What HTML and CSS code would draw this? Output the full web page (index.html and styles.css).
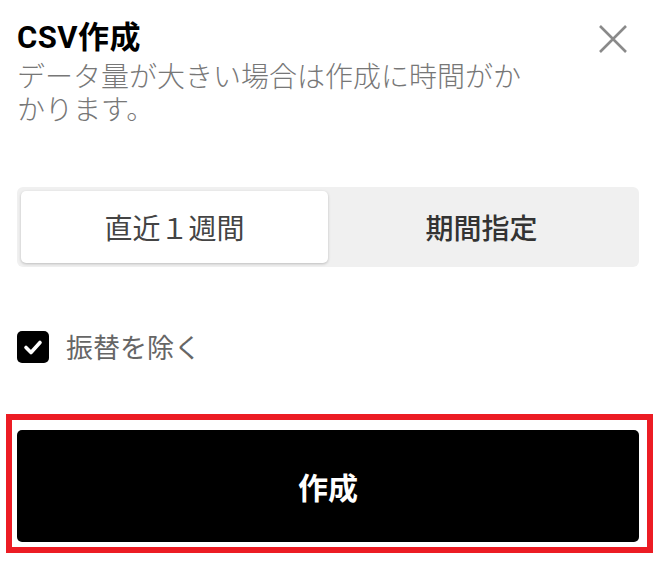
FILE: index.html
```html
<!DOCTYPE html>
<html lang="ja">

<head>
  <meta charset="UTF-8">
  <meta name="viewport" content="width=device-width, initial-scale=1.0">
  <title>CSV作成</title>
  <link rel="stylesheet" href="styles.css">
</head>

<body>
  <div class="sheet">
    <div class="head">
      <div class="head-text">
        <h1 class="title">CSV作成</h1>
        <p class="lead">データ量が大きい場合は作成に時間がかかります。</p>
      </div>
      <button class="close" type="button" aria-label="閉じる">
        <svg width="30" height="28" viewBox="0 0 30 28">
          <path d="M2 1 L28 27 M28 1 L2 27" stroke="#8a8a8a" stroke-width="2.6" fill="none" />
        </svg>
      </button>
    </div>

    <div class="segment">
      <div class="seg seg-active">直近１週間</div>
      <div class="seg">期間指定</div>
    </div>

    <label class="check">
      <span class="box">
        <svg width="32" height="32" viewBox="0 0 32 32">
          <path d="M9 16.5 L14 21.5 L23 11.5" stroke="#fff" stroke-width="3.6" fill="none" stroke-linecap="round" stroke-linejoin="round" />
        </svg>
      </span>
      <span class="check-label">振替を除く</span>
    </label>

    <button class="submit" type="button">作成</button>
  </div>

  <div class="mark"></div>
</body>

</html>
```

FILE: styles.css
```css
* {
  box-sizing: border-box;
}

body {
  margin: 0;
  background: #fff;
  font-family: "Noto Sans CJK JP", "Noto Sans", sans-serif;
}

.sheet {
  padding: 20px 20px 0 17px;
}

.head {
  display: flex;
  justify-content: space-between;
  align-items: flex-start;
}

.title {
  margin: 0;
  font-family: Roboto, "Noto Sans CJK JP", sans-serif;
  font-size: 31px;
  line-height: 36px;
  font-weight: 700;
  color: #000;
  letter-spacing: 0.5px;
}

.lead {
  width: 520px;
  margin: 3px 0 0;
  font-size: 28px;
  line-height: 33px;
  font-weight: 300;
  color: #777;
}

.close {
  border: 0;
  padding: 0;
  margin: 5px 11px 0 0;
  background: none;
  width: 30px;
  height: 28px;
}

.segment {
  margin-top: 62px;
  height: 80px;
  padding: 4px;
  background: #f0f0f0;
  border-radius: 6px;
  display: grid;
  grid-template-columns: 1fr 1fr;
}

.seg {
  display: flex;
  align-items: center;
  justify-content: center;
  font-size: 28px;
  color: #333;
  font-weight: 500;
}

.seg-active {
  background: #fff;
  border-radius: 5px;
  box-shadow: 0 1px 3px rgba(0, 0, 0, .22);
  color: #444;
  font-weight: 400;
}

.check {
  margin-top: 60px;
  display: flex;
  align-items: center;
  gap: 17px;
}

.box {
  width: 32px;
  height: 32px;
  background: #000;
  border-radius: 5px;
  display: block;
}

.box svg {
  display: block;
}

.check-label {
  font-size: 27px;
  color: #666;
}

.submit {
  margin-top: 64px;
  width: 100%;
  height: 112px;
  border: 0;
  border-radius: 5px;
  background: #000;
  color: #fff;
  font-family: inherit;
  font-size: 30px;
  font-weight: 700;
}

.mark {
  position: absolute;
  left: 6px;
  top: 414px;
  width: 647px;
  height: 139px;
  border: 6px solid #ec1c24;
}
```
